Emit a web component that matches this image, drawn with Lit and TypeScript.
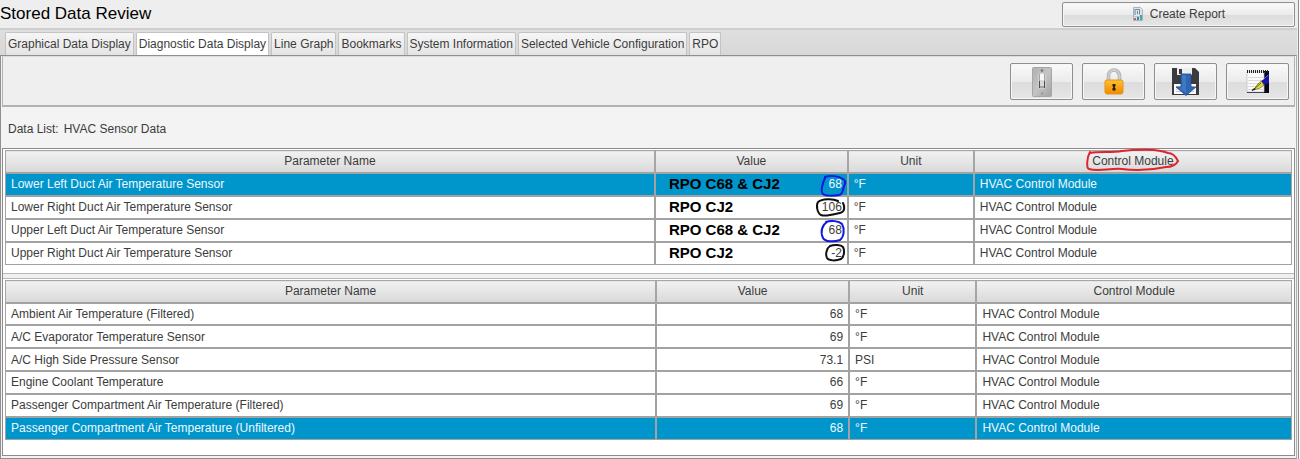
import { LitElement, html, svg, css, nothing } from "lit";
import { customElement, property, state } from "lit/decorators.js";
import { classMap } from "lit/directives/class-map.js";

interface Reading {
  name: string;
  value: string;
  unit: string;
  module: string;
  note?: string;
  ring?: { color: string; path: string };
}

const BLUE = "#1018e0";
const BLACK = "#101010";
const MODULE = "HVAC Control Module";

const DUCT_READINGS: Reading[] = [
  {
    name: "Lower Left Duct Air Temperature Sensor", value: "68", unit: "°F", module: MODULE,
    note: "RPO C68 & CJ2",
    ring: { color: BLUE, path: "M10 3C15 1 24 2 28 5C31 7 31 9 29 12C28 17 27 21 24 21C18 22 10 22 8 20C5 17 8 8 10 4" },
  },
  {
    name: "Lower Right Duct Air Temperature Sensor", value: "106", unit: "°F", module: MODULE,
    note: "RPO CJ2",
    ring: { color: BLACK, path: "M23 4C17 1 7 2 3 5C1 8 2 16 6 18C11 20 20 17 25 16C30 15 30 10 28 6" },
  },
  {
    name: "Upper Left Duct Air Temperature Sensor", value: "68", unit: "°F", module: MODULE,
    note: "RPO C68 & CJ2",
    ring: { color: BLUE, path: "M11 2C16 0 24 1 27 4C30 9 29 17 25 20C19 22 10 22 8 18C5 12 7 5 12 2" },
  },
  {
    name: "Upper Right Duct Air Temperature Sensor", value: "-2", unit: "°F", module: MODULE,
    note: "RPO CJ2",
    ring: { color: BLACK, path: "M15 3C20 1 26 2 28 4C30 8 29 14 26 16C21 18 14 18 12 15C10 11 12 5 15 3" },
  },
];

const OTHER_READINGS: Reading[] = [
  { name: "Ambient Air Temperature (Filtered)", value: "68", unit: "°F", module: MODULE },
  { name: "A/C Evaporator Temperature Sensor", value: "69", unit: "°F", module: MODULE },
  { name: "A/C High Side Pressure Sensor", value: "73.1", unit: "PSI", module: MODULE },
  { name: "Engine Coolant Temperature", value: "66", unit: "°F", module: MODULE },
  { name: "Passenger Compartment Air Temperature (Filtered)", value: "69", unit: "°F", module: MODULE },
  { name: "Passenger Compartment Air Temperature (Unfiltered)", value: "68", unit: "°F", module: MODULE },
];

const TABS = [
  "Graphical Data Display",
  "Diagnostic Data Display",
  "Line Graph",
  "Bookmarks",
  "System Information",
  "Selected Vehicle Configuration",
  "RPO",
];

const reportIcon = html`<svg width="12" height="16" viewBox="0 0 12 16" aria-hidden="true">
  <path d="M1.500 1.500h7l2 2v11h-9z" fill="#dde4ea" stroke="#a9b5be" />
  <path d="M3 3v6M3.500 3.500h4v5M5.500 5v3" fill="none" stroke="#6f879c" />
  <path d="M2.500 10.500h7" stroke="#b5c1ca" />
  <path d="M2 12h2v2H2z" fill="#c2607a" />
  <path d="M5 11h2v3H5z" fill="#4a78a8" />
  <path d="M8 9h2v5H8z" fill="#3fae88" />
</svg>`;

const switchIcon = html`<svg width="20" height="30" viewBox="0 0 20 30" aria-hidden="true">
  <defs><linearGradient id="plate" x1="0" x2="1" y1="0" y2="1"><stop offset="0" stop-color="#b0b0b0" /><stop offset=".5" stop-color="#c4c4c4" /><stop offset="1" stop-color="#a2a2a2" /></linearGradient></defs>
  <rect x=".5" y=".5" width="19" height="29" rx="1" fill="url(#plate)" stroke="#a6a6a6" />
  <circle cx="10" cy="3.500" r="1.300" fill="#777" /><circle cx="10" cy="26.500" r="1.300" fill="#999" />
  <rect x="6.500" y="6.500" width="7" height="15" rx="1" fill="#a4a4a4" stroke="#cfcfcf" />
  <path d="M7.500 21V14M12.500 21V14" stroke="#4c4c4c" />
  <path d="M8 7h4v12H8z" fill="#f7f7f7" />
  <path d="M8 13h4v6H8z" fill="#d9d9d9" />
</svg>`;

const lockIcon = html`<svg width="20" height="27" viewBox="0 0 20 27" aria-hidden="true">
  <defs><linearGradient id="brass" x1="0" x2="0" y1="0" y2="1"><stop offset="0" stop-color="#ffc132" /><stop offset="1" stop-color="#f28a00" /></linearGradient></defs>
  <path d="M4.500 13V8a5.500 6 0 0 1 11 0v5" fill="none" stroke="#b0b0b0" stroke-width="3.600" />
  <path d="M4.500 13V8a5.500 6 0 0 1 11 0v5" fill="none" stroke="#cfcfcf" stroke-width="1.800" />
  <rect x="1" y="12" width="18" height="14" rx="2" fill="url(#brass)" stroke="#e0951a" />
  <path d="M8.500 16h3v2.500h-1v1.500h1v2.500h-3V20h1v-1.500h-1z" fill="#2c1e00" />
  <path d="M10 16v6" stroke="#2c1e00" stroke-width="1.500" />
</svg>`;

const saveIcon = html`<svg width="27" height="29" viewBox="0 0 27 29" aria-hidden="true">
  <path d="M0 1h23l4 4v23H0z" fill="#3b3b3f" />
  <path d="M5 1h15v7H5z" fill="#ededed" />
  <path d="M7 2h3v5H7z" fill="#3b3b3f" />
  <path d="M2 17h22v10H2z" fill="#fafafa" />
  <path d="M4 19.500h18M4 22h18M4 24.500h18" stroke="#c5c9d0" />
  <path d="M9 7h10v13h5L14 28.500 4 20h5z" fill="#2f66b3" stroke="#1e4d93" stroke-width=".8" />
  <path d="M10 8h4v18l-7-5.500h3z" fill="#4a83cc" opacity=".6" />
</svg>`;

const notepadIcon = html`<svg width="24" height="25" viewBox="0 0 24 25" aria-hidden="true">
  <path d="M18 2h5v22H1v-1h17z" fill="#080818" />
  <path d="M1 3h17v20H1z" fill="#fbfbfb" stroke="#bcbcbc" stroke-width=".7" />
  <path d="M2 8.500h15M2 11.500h15M2 14.500h15M2 17.500h15M2 20.500h15" stroke="#cccccc" stroke-width=".7" />
  <path d="M1 2.500h22" stroke="#222" stroke-width="3" stroke-dasharray="1 1" />
  <path d="M23 4v10l-5 2-3-4 5-3z" fill="#1515a8" />
  <path d="M22 6l-5 5" stroke="#6969f2" />
  <path d="M15 12l3 4-4 3-6 2 3-5z" fill="#e3df42" stroke="#6a6a18" stroke-width=".7" />
  <path d="M15 14l-8 7" stroke="#33330a" stroke-width=".8" />
  <path d="M6 21.500l3-2" stroke="#111" stroke-width="1.500" />
</svg>`;

@customElement("data-grid")
class DataGrid extends LitElement {
  @property({ attribute: false }) rows: Reading[] = [];
  @property({ type: Number }) selected = -1;
  @property({ type: Boolean, reflect: true }) marked = false;
  @property() label = "";

  static styles = css`
    :host { display: block; }
    .grid {
      width: 100%;
      height: 160px;
      table-layout: fixed;
      border-collapse: collapse;
      color: #3c3c3c;
      background: #fff;
    }
    :host([marked]) .grid { height: 115px; }
    .name { width: 50.6%; }
    .value { width: 15%; }
    .unit { width: 9.9%; }
    :host([marked]) .name { width: 50.5%; }
    :host([marked]) .unit { width: 9.8%; }
    tr { height: 22px; }
    th, td {
      position: relative;
      padding: 0 5px;
      border: 1px solid #a2a2a2;
      font-weight: normal;
      text-align: left;
      line-height: 16px;
      white-space: nowrap;
    }
    th {
      text-align: center;
      border-color: #a6a6a6;
      background: linear-gradient(#f1f1f1, #d9d9d9);
    }
    th + th, td + td { border-left-width: 2px; }
    td { border-top-width: 2px; }
    .on td { background: #0095cb; color: #eef9ff; }
    .reading { display: flex; justify-content: space-between; align-items: center; padding-left: 8px; }
    .note { font-size: 15px; font-weight: bold; color: #000; }
    .number { margin-left: auto; }
    .ring { position: absolute; top: 0; right: 0; overflow: visible; z-index: 1; }
    .heading { position: relative; }
    .loop { position: absolute; top: -5px; left: -6px; overflow: visible; z-index: 1; }
  `;

  render() {
    return html`<table class="grid" aria-label=${this.label}>
      <colgroup><col class="name" /><col class="value" /><col class="unit" /><col /></colgroup>
      <thead><tr>
        <th scope="col">Parameter Name</th>
        <th scope="col">Value</th>
        <th scope="col">Unit</th>
        <th scope="col"><span class="heading">Control Module${this.marked
          ? html`<svg class="loop" width="96" height="24" viewBox="0 0 96 24" aria-hidden="true">
              <path d="M4 4C14 2 26 4 36 2C52 0 72 0 82 4C87 4 90 8 92 12C90 16 86 18 80 18C66 21 50 22 36 20C24 19 12 23 3 20C0 19 1 8 4 3" fill="none" stroke="#e0242e" stroke-width="2" stroke-linecap="round" />
            </svg>`
          : nothing}</span></th>
      </tr></thead>
      <tbody>
        ${this.rows.map((r, i) => html`<tr class=${classMap({ on: i === this.selected })}>
          <td>${r.name}</td>
          <td><div class="reading">
            ${r.note ? html`<span class="note">${r.note}</span>` : nothing}
            <span class="number">${r.value}</span>
          </div>${r.ring
            ? html`<svg class="ring" width="32" height="22" viewBox="0 0 32 22" aria-hidden="true">${svg`<path d=${r.ring.path} fill="none" stroke=${r.ring.color} stroke-width="2" stroke-linecap="round" />`}</svg>`
            : nothing}</td>
          <td>${r.unit}</td>
          <td>${r.module}</td>
        </tr>`)}
      </tbody>
    </table>`;
  }
}

@customElement("app-root")
class AppRoot extends LitElement {
  @state() private tab = 1;

  static styles = css`
    :host {
      display: flex;
      flex-direction: column;
      box-sizing: border-box;
      min-height: 100vh;
      padding-right: 1px;
      background: linear-gradient(#fff, #fff) right / 1px 100% no-repeat, #eeeeee;
      font: 12px/16px "Liberation Sans", Arial, sans-serif;
      color: #3c3c3c;
    }
    button { font: inherit; color: inherit; }
    .window {
      display: flex;
      flex-direction: column;
      flex: 1;
      border-right: 1px solid #8c8c8c;
      padding-right: 1px;
    }
    .top { display: flex; justify-content: space-between; align-items: center; height: 28px; padding-right: 2px; }
    .title { margin: 0; font-size: 17px; line-height: 20px; font-weight: normal; color: #000; }
    .push {
      display: flex;
      align-items: center;
      justify-content: center;
      gap: 6px;
      box-sizing: border-box;
      padding: 0;
      border: 1px solid #8f8f8f;
      border-radius: 2px;
      background: linear-gradient(#fafafa, #ebebeb 50%, #dcdcdc 51%, #e6e6e6);
      box-shadow: inset 0 0 0 1px #f6f6f6;
    }
    .report { width: 18%; height: 25px; }
    .tabs {
      display: flex;
      align-items: flex-end;
      gap: 2px;
      height: 27px;
      box-sizing: border-box;
      padding-left: 5px;
      border-top: 2px solid #cfcfcf;
      background: linear-gradient(#dedede, #d8d8d8);
    }
    .tab {
      height: 23px;
      padding: 0 2px;
      border: 1px solid #c3c3c3;
      border-width: 1px 1px 0;
      border-radius: 2px 2px 0 0;
      background: linear-gradient(#f6f6f6, #e4e4e4);
      white-space: nowrap;
    }
    .tab.current { background: #fff; }
    .pane {
      display: flex;
      flex-direction: column;
      flex: 1;
      padding: 0 1px 2px;
      border: 1px solid #8f8f8f;
      border-right-color: #b0b0b0;
      background: #f3f3f3;
    }
    .tools {
      display: flex;
      justify-content: flex-end;
      align-items: center;
      gap: 9px;
      height: 51px;
      box-sizing: border-box;
      padding: 1px 5px 0 0;
      border: solid #b2b2b2;
      border-width: 1px 1px 2px;
      border-top-color: #dcdcdc;
      background: #efefef;
    }
    .tool { width: 63px; height: 37px; }
    .caption { display: flex; gap: 5px; padding: 14px 6px 11px; }
    .lists {
      display: flex;
      flex-direction: column;
      flex: 1;
      border: 1px solid #8c8c8c;
      background: #fff;
    }
    .list { padding: 1px 2px 8px; }
    .split { height: 4px; border: solid #b8b8b8; border-width: 1px 0; background: #f0f0f0; }
  `;

  render() {
    return html`<div class="window">
      <header class="top">
        <h1 class="title">Stored Data Review</h1>
        <button class="push report">${reportIcon}Create Report</button>
      </header>
      <nav class="tabs" role="tablist">
        ${TABS.map((t, i) => html`<button
          class=${classMap({ tab: true, current: i === this.tab })}
          role="tab"
          aria-selected=${i === this.tab ? "true" : "false"}
          @click=${() => { this.tab = i; }}>${t}</button>`)}
      </nav>
      <main class="pane">
        <div class="tools">
          <button class="push tool" aria-label="Toggle">${switchIcon}</button>
          <button class="push tool" aria-label="Lock">${lockIcon}</button>
          <button class="push tool" aria-label="Save">${saveIcon}</button>
          <button class="push tool" aria-label="Notes">${notepadIcon}</button>
        </div>
        <div class="caption"><span>Data List:</span><span>HVAC Sensor Data</span></div>
        <section class="lists">
          <data-grid class="list" marked label="Duct sensors" .rows=${DUCT_READINGS} .selected=${0}></data-grid>
          <div class="split"></div>
          <data-grid class="list" label="Other sensors" .rows=${OTHER_READINGS} .selected=${5}></data-grid>
        </section>
      </main>
    </div>`;
  }
}
